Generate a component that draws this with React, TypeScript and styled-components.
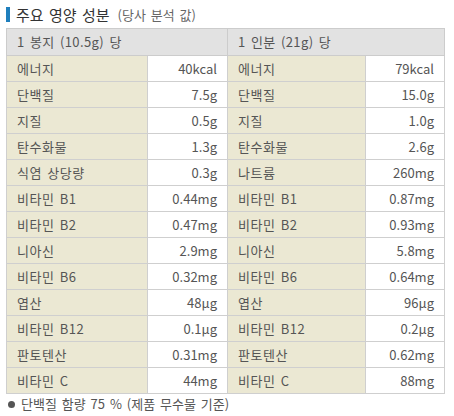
import styled, { createGlobalStyle } from "styled-components";

const GlobalStyle = createGlobalStyle`
  html, body {
    margin: 0;
    padding: 0;
    background: #ffffff;
  }
  body {
    font-family: "Noto Sans CJK KR", "Noto Sans", sans-serif;
    color: #555555;
    word-spacing: 2px;
  }
`;

const Wrapper = styled.div`
  width: 454px;
  padding: 6px 0 0 6px;
  box-sizing: border-box;
`;

const TitleRow = styled.h2`
  display: flex;
  align-items: center;
  margin: 0;
  height: 17px;
  font-weight: normal;
`;

const Accent = styled.span`
  width: 4px;
  height: 15px;
  background: #1f7fbd;
  margin-right: 6px;
`;

const TitleMain = styled.span`
  font-size: 15px;
  color: #333333;
  line-height: 17px;
`;

const TitleSub = styled.span`
  font-size: 13px;
  color: #666666;
  margin-left: 8px;
  line-height: 17px;
`;

const Table = styled.table`
  margin-top: 5px;
  border-collapse: collapse;
  table-layout: fixed;
  width: 438px;
  font-size: 13px;
  line-height: 16px;
`;

const HeadCell = styled.th`
  background: #e2e2e2;
  border: 1px solid #cccccc;
  height: 26px;
  padding: 0 0 0 10px;
  text-align: left;
  font-weight: normal;
  color: #555555;
  letter-spacing: 0.4px;
`;

const Cell = styled.td<{ $label?: boolean }>`
  height: 25px;
  border: 1px solid #cfcfcf;
  padding: ${(p) => (p.$label ? "0 0 0 10px" : "0 10px 0 0")};
  text-align: ${(p) => (p.$label ? "left" : "right")};
  background: ${(p) => (p.$label ? "#ebe8d3" : "#ffffff")};
  color: #555555;
  white-space: nowrap;
  letter-spacing: ${(p) => (p.$label ? "0.5px" : "0")};
`;

const Note = styled.p`
  margin: 2px 0 0 2px;
  font-size: 13px;
  line-height: 16px;
  color: #555555;
  display: flex;
  align-items: center;
`;

const Dot = styled.span`
  width: 7px;
  height: 7px;
  border-radius: 50%;
  background: #555555;
  margin-right: 6px;
`;

const rows: [string, string, string, string][] = [
  ["에너지", "40kcal", "에너지", "79kcal"],
  ["단백질", "7.5g", "단백질", "15.0g"],
  ["지질", "0.5g", "지질", "1.0g"],
  ["탄수화물", "1.3g", "탄수화물", "2.6g"],
  ["식염 상당량", "0.3g", "나트륨", "260mg"],
  ["비타민 B1", "0.44mg", "비타민 B1", "0.87mg"],
  ["비타민 B2", "0.47mg", "비타민 B2", "0.93mg"],
  ["니아신", "2.9mg", "니아신", "5.8mg"],
  ["비타민 B6", "0.32mg", "비타민 B6", "0.64mg"],
  ["엽산", "48μg", "엽산", "96μg"],
  ["비타민 B12", "0.1μg", "비타민 B12", "0.2μg"],
  ["판토텐산", "0.31mg", "판토텐산", "0.62mg"],
  ["비타민 C", "44mg", "비타민 C", "88mg"],
];

export default function App() {
  return (
    <>
      <GlobalStyle />
      <Wrapper>
        <TitleRow>
          <Accent />
          <TitleMain>주요 영양 성분</TitleMain>
          <TitleSub>(당사 분석 값)</TitleSub>
        </TitleRow>
        <Table>
          <colgroup>
            <col style={{ width: 141 }} />
            <col style={{ width: 80 }} />
            <col style={{ width: 138 }} />
            <col style={{ width: 79 }} />
          </colgroup>
          <thead>
            <tr>
              <HeadCell colSpan={2}>1 봉지 (10.5g) 당</HeadCell>
              <HeadCell colSpan={2}>1 인분 (21g) 당</HeadCell>
            </tr>
          </thead>
          <tbody>
            {rows.map((r, i) => (
              <tr key={i}>
                <Cell $label>{r[0]}</Cell>
                <Cell>{r[1]}</Cell>
                <Cell $label>{r[2]}</Cell>
                <Cell>{r[3]}</Cell>
              </tr>
            ))}
          </tbody>
        </Table>
        <Note>
          <Dot />
          단백질 함량 75 % (제품 무수물 기준)
        </Note>
      </Wrapper>
    </>
  );
}
